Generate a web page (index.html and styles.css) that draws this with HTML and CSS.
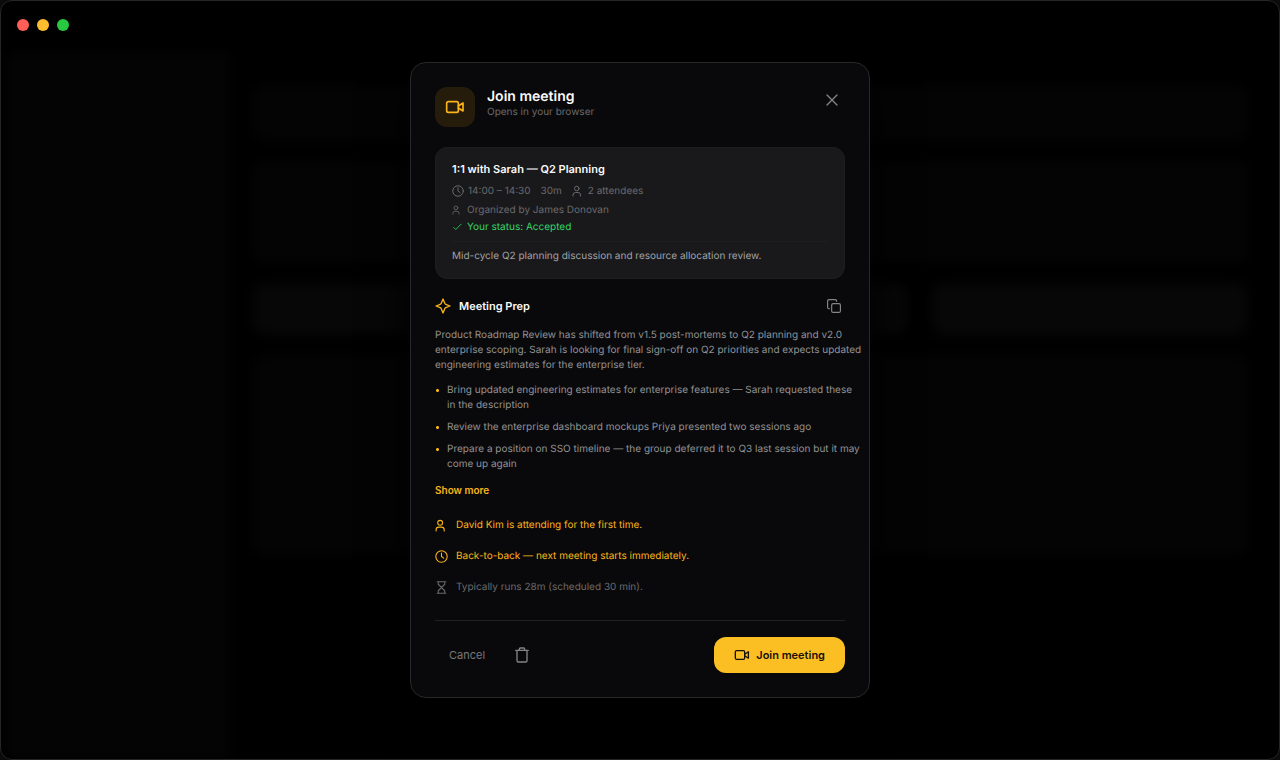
FILE: index.html
```html
<!DOCTYPE html>
<html lang="en">
<head>
  <meta charset="UTF-8">
  <meta name="viewport" content="width=device-width, initial-scale=1.0">
  <title>Join meeting</title>
  <link rel="stylesheet" href="styles.css">
</head>
<body>
  <svg class="sprite" aria-hidden="true">
    <symbol id="i-video" viewBox="0 0 24 24">
      <rect x="2" y="5.500" width="14" height="13" rx="2"/>
      <path d="M16 10.800l5.600-3.600v9.600L16 13.200"/>
    </symbol>
    <symbol id="i-clock" viewBox="0 0 24 24">
      <circle cx="12" cy="12" r="10.5"/>
      <path d="M12 5.5V12l4 3"/>
    </symbol>
    <symbol id="i-user" viewBox="0 0 24 24">
      <circle cx="9.500" cy="7" r="4.500"/>
      <path d="M2 22v-2a5 5 0 0 1 5-5h5a5 5 0 0 1 5 5v2"/>
    </symbol>
  </svg>

  <div class="window">
    <header class="titlebar">
      <span class="dot red"></span>
      <span class="dot yellow"></span>
      <span class="dot green"></span>
    </header>
    <div class="backdrop">
      <div class="sidebar"></div>
      <div class="content">
        <div class="block block-top"></div>
        <div class="block block-mid"></div>
        <div class="block-row">
          <div class="block"></div>
          <div class="block"></div>
          <div class="block"></div>
        </div>
        <div class="block block-main"></div>
      </div>
    </div>
  </div>

  <div class="overlay">
    <section class="modal" role="dialog" aria-labelledby="modal-title">
      <header class="modal-header">
        <div class="modal-icon">
          <svg class="icon icon-20"><use href="#i-video"/></svg>
        </div>
        <div class="modal-heading">
          <h1 id="modal-title">Join meeting</h1>
          <p>Opens in your browser</p>
        </div>
        <button class="icon-btn" type="button" aria-label="Close">
          <svg class="icon icon-16" viewBox="0 0 24 24"><path d="M4.500 4.500l15 15M19.500 4.500l-15 15"/></svg>
        </button>
      </header>

      <div class="card">
        <h2>1:1 with Sarah — Q2 Planning</h2>
        <div class="meta times">
          <span class="meta-item"><svg class="icon icon-12"><use href="#i-clock"/></svg>14:00 – 14:30</span>
          <span class="meta-item">30m</span>
          <span class="meta-item"><svg class="icon icon-12"><use href="#i-user"/></svg>2 attendees</span>
        </div>
        <div class="meta organizer"><svg class="icon icon-10"><use href="#i-user"/></svg>Organized by James Donovan</div>
        <div class="meta status"><svg class="icon icon-10" viewBox="0 0 24 24"><path d="M4 13l5 5L22 5"/></svg>Your status: Accepted</div>
        <p class="description">Mid-cycle Q2 planning discussion and resource allocation review.</p>
      </div>

      <div class="prep-header">
        <svg class="icon icon-16 sparkle" viewBox="0 0 24 24"><path d="M12 1.500l2.600 6.300a3 3 0 0 0 1.600 1.600L22.500 12l-6.300 2.600a3 3 0 0 0-1.600 1.600L12 22.500l-2.600-6.300a3 3 0 0 0-1.600-1.600L1.500 12l6.300-2.600a3 3 0 0 0 1.600-1.600z"/></svg>
        <h2>Meeting Prep</h2>
        <button class="icon-btn small" type="button" aria-label="Copy">
          <svg class="icon icon-14" viewBox="0 0 24 24"><rect x="8" y="8" width="15" height="15" rx="2.500"/><path d="M4 16.500H3.500A2.500 2.500 0 0 1 1 14V3.500A2.500 2.500 0 0 1 3.500 1H14a2.500 2.500 0 0 1 2.500 2.500V4"/></svg>
        </button>
      </div>
      <div class="prep-body">
        <p class="summary">Product Roadmap Review has shifted from v1.5 post-mortems to Q2 planning and v2.0 enterprise scoping. Sarah is looking for final sign-off on Q2 priorities and expects updated engineering estimates for the enterprise tier.</p>
        <ul class="prep-list">
          <li>Bring updated engineering estimates for enterprise features — Sarah requested these<br>in the description</li>
          <li>Review the enterprise dashboard mockups Priya presented two sessions ago</li>
          <li>Prepare a position on SSO timeline — the group deferred it to Q3 last session but it may<br>come up again</li>
        </ul>
      </div>
      <button class="show-more" type="button">Show more</button>

      <div class="insights">
        <div class="insight"><svg class="icon icon-13"><use href="#i-user"/></svg>David Kim is attending for the first time.</div>
        <div class="insight"><svg class="icon icon-13"><use href="#i-clock"/></svg>Back-to-back — next meeting starts immediately.</div>
        <div class="insight muted"><svg class="icon icon-13" viewBox="0 0 24 24"><path d="M4 1.500h16M4 22.500h16M6 1.500v4.500l6 6 6-6V1.500M6 22.500V18l6-6 6 6v4.500"/></svg>Typically runs 28m (scheduled 30 min).</div>
      </div>

      <footer class="modal-footer">
        <button class="cancel" type="button">Cancel</button>
        <button class="icon-btn" type="button" aria-label="Delete">
          <svg class="icon icon-16" viewBox="0 0 24 24"><path d="M2.500 5h19M8 5V3a1.500 1.500 0 0 1 1.500-1.500h5A1.500 1.500 0 0 1 16 3v2M4.500 5v15.500a2 2 0 0 0 2 2h11a2 2 0 0 0 2-2V5"/></svg>
        </button>
        <button class="join" type="button"><svg class="icon icon-16"><use href="#i-video"/></svg>Join meeting</button>
      </footer>
    </section>
  </div>
</body>
</html>
```

FILE: styles.css
```css
* {
  box-sizing: border-box;
}

body {
  margin: 0;
  background: #0b0b0b;
  color: #fafafa;
  font-family: Inter, sans-serif;
  font-size: 10px;
  line-height: 16px;
  text-rendering: geometricPrecision;
}

h1, h2, p, ul {
  margin: 0;
  padding: 0;
}

button {
  border: none;
  padding: 0;
  background: none;
  color: inherit;
  font: inherit;
  cursor: pointer;
}

.sprite {
  display: none;
}

/* window behind the dialog */
.window {
  display: flex;
  flex-direction: column;
  height: 100vh;
  border: 1px solid #262626;
  border-radius: 12px;
  background: #000;
  overflow: hidden;
}

.titlebar {
  display: flex;
  gap: 8px;
  padding: 18px 16px;
}

.dot {
  width: 12px;
  height: 12px;
  border-radius: 50%;
}

.red { background: #ff5f57; }
.yellow { background: #febc2e; }
.green { background: #28c840; }

.backdrop {
  display: flex;
  flex: 1;
  gap: 24px;
  padding: 4px 32px 0 6px;
  filter: blur(6px);
}

.sidebar {
  width: 222px;
  background: #040404;
}

.content {
  display: flex;
  flex-direction: column;
  flex: 1;
  gap: 20px;
  padding-top: 32px;
}

.block {
  flex: 1;
  border-radius: 12px;
  background: #040404;
}

.block-top { flex: 0 0 56px; }
.block-mid { flex: 0 0 102px; }
.block-main { flex: 0 0 200px; }

.block-row {
  display: flex;
  flex: 0 0 52px;
  gap: 24px;
}

.block-row .block {
  background: #070707;
}

/* dialog */
.overlay {
  position: absolute;
  inset: 0;
  display: flex;
  align-items: center;
  justify-content: center;
}

.modal {
  width: 460px;
  max-width: 100%;
  padding: 24px;
  border: 1px solid #28282a;
  border-radius: 16px;
  background: #09090b;
  box-shadow: 0 16px 48px #000;
}

.icon {
  flex: none;
  fill: none;
  stroke: currentColor;
  stroke-width: 2;
  stroke-linecap: round;
  stroke-linejoin: round;
}

.icon-10 { width: 10px; height: 10px; }
.icon-12 { width: 12px; height: 12px; }
.icon-13 { width: 13px; height: 13px; }
.icon-14 { width: 14px; height: 14px; }
.icon-16 { width: 16px; height: 16px; }
.icon-20 { width: 20px; height: 20px; }

.modal-header {
  display: flex;
  gap: 12px;
  margin-bottom: 20px;
}

.modal-icon {
  display: flex;
  align-items: center;
  justify-content: center;
  width: 40px;
  height: 40px;
  border-radius: 12px;
  background: #251c0c;
  color: #fbb41a;
}

.modal-heading {
  flex: 1;
}

.modal-heading h1 {
  font-size: 14px;
  font-weight: 600;
  line-height: 20px;
}

.modal-heading p {
  line-height: 11px;
  color: #69696c;
}

.icon-btn {
  display: flex;
  align-items: center;
  justify-content: center;
  width: 26px;
  height: 26px;
  color: #858588;
}

.icon-btn.small {
  width: 22px;
  height: 22px;
}

.card {
  padding: 12px 16px 14px;
  border: 1px solid #1e1e20;
  border-radius: 12px;
  background: #19191b;
}

.card h2,
.prep-header h2 {
  font-size: 11px;
  font-weight: 600;
  line-height: 18px;
}

.meta {
  display: flex;
  align-items: center;
  gap: 10px;
  color: #69696c;
}

.times {
  margin-top: 5px;
}

.meta-item {
  display: flex;
  align-items: center;
  gap: 4px;
}

.organizer,
.status {
  gap: 5px;
}

.organizer {
  margin-top: 3px;
}

.status {
  margin-top: 1px;
  color: #34d567;
}

.description {
  margin-top: 6px;
  padding-top: 6px;
  border-top: 1px solid #1e1e20;
  color: #a1a1a4;
}

.prep-header {
  display: flex;
  align-items: center;
  gap: 8px;
  margin-top: 16px;
}

.prep-header h2 {
  flex: 1;
}

.sparkle {
  color: #fbb41a;
}

.prep-body {
  margin: 11px -18px 0 0;
  line-height: 15px;
  color: #929295;
}

.prep-list {
  display: flex;
  flex-direction: column;
  gap: 7px;
  margin-top: 10px;
  list-style: none;
}

.prep-list li {
  padding-left: 12px;
  background: radial-gradient(circle, #fbb41a 1px, transparent 2px) 0 5px / 5px 5px no-repeat;
}

.show-more {
  display: block;
  margin-top: 10px;
  font-weight: 600;
  color: #fbb41a;
}

.insights {
  display: flex;
  flex-direction: column;
  gap: 15px;
  margin-top: 19px;
}

.insight {
  display: flex;
  align-items: center;
  gap: 8px;
  color: #fbb41a;
}

.muted {
  color: #69696c;
}

.modal-footer {
  display: flex;
  align-items: center;
  gap: 10px;
  margin-top: 25px;
  padding-top: 16px;
  border-top: 1px solid #202022;
}

.cancel {
  padding: 10px 14px;
  font-size: 11px;
  color: #78787b;
}

.join {
  display: flex;
  align-items: center;
  gap: 6px;
  margin-left: auto;
  padding: 10px 20px;
  border-radius: 12px;
  background: #fbbf24;
  color: #171005;
  font-size: 11px;
  font-weight: 600;
}
```
